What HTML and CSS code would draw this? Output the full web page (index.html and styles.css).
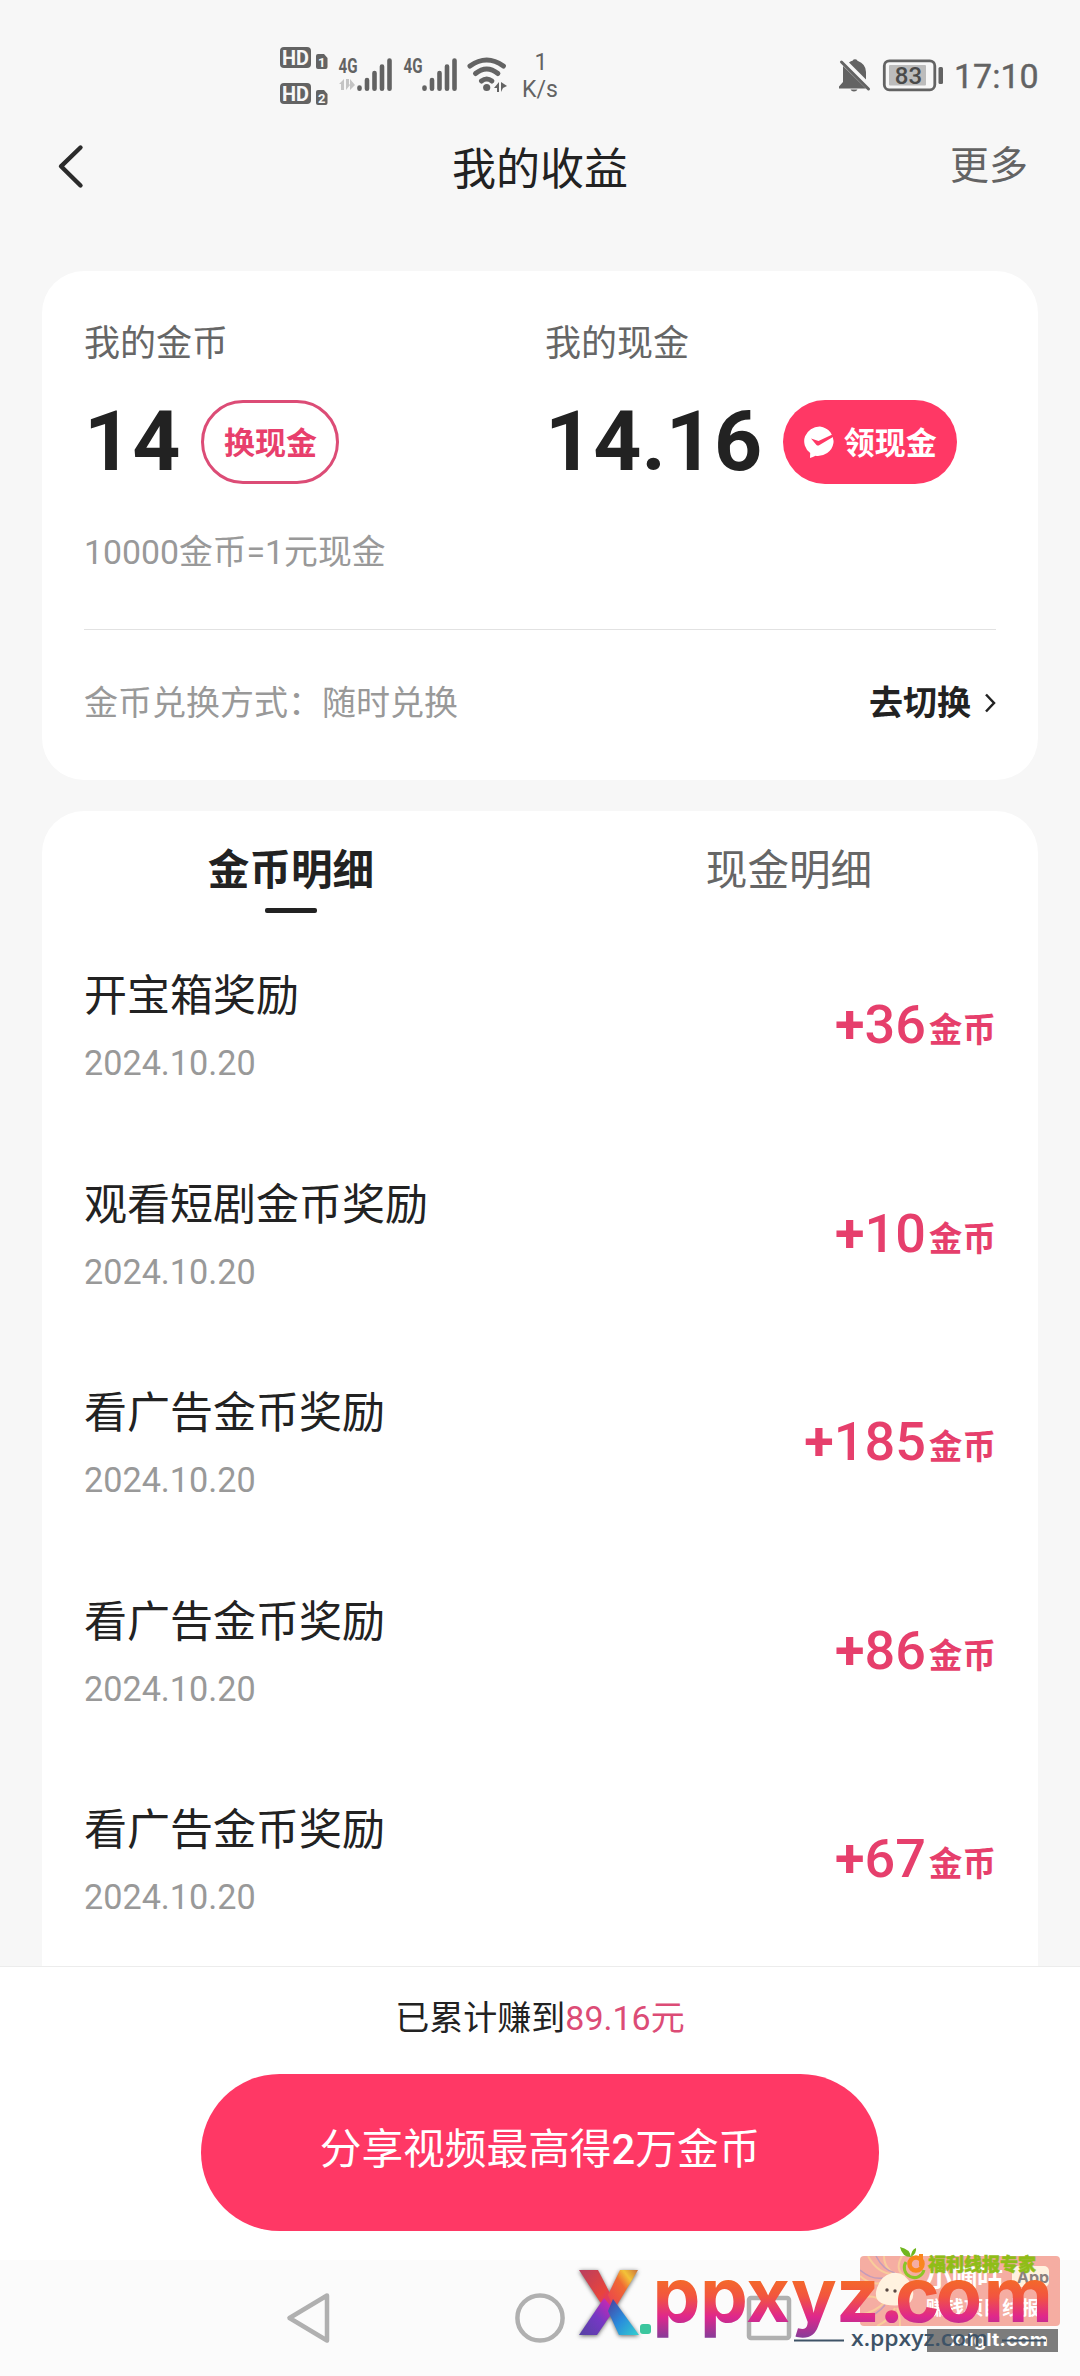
FILE: index.html
```html
<!DOCTYPE html>
<html lang="zh-CN">
<head>
<meta charset="utf-8">
<title>我的收益</title>
<link rel="stylesheet" href="styles.css">
</head>
<body>
<div class="screen">
  <div class="statusbar">
    <svg class="status-left" width="300" height="80" viewBox="270 40 300 80">
      <g fill="#636363">
        <rect x="280" y="47" width="31" height="21" rx="4"/>
        <rect x="280" y="83" width="31" height="21" rx="4"/>
        <path d="M318 54h6l3.500 4v9a2 2 0 0 1-2 2H318a2 2 0 0 1-2-2V56a2 2 0 0 1 2-2z"/>
        <path d="M318 90h6l3.500 4v9a2 2 0 0 1-2 2H318a2 2 0 0 1-2-2V92a2 2 0 0 1 2-2z"/>
      </g>
      <g class="hd"><text x="282" y="64.500" textLength="27" lengthAdjust="spacingAndGlyphs">HD</text><text x="282" y="100.500" textLength="27" lengthAdjust="spacingAndGlyphs">HD</text></g>
      <g class="sim"><text x="318" y="67">1</text><text x="318" y="103">2</text></g>
      <g class="net"><text x="338.500" y="72.500" textLength="19" lengthAdjust="spacingAndGlyphs">4G</text><text x="403.500" y="72.500" textLength="19" lengthAdjust="spacingAndGlyphs">4G</text></g>
      <g fill="#c4c4c4"><path d="M339 84l5-5v11h-3v-6zM346 79h3v5l1 1-4 5zM350 79l5 6-5 5z"/></g>
      <g stroke="#636363" stroke-width="4.600" stroke-linecap="round"><path d="M359.500 87.500v1.200M367 80v8.700M374.500 73v15.700M382 66.500v22.200M389.500 60.500v28.200"/><path d="M424.500 87.500v1.200M432 80v8.700M439.500 73v15.700M447 66.500v22.200M454.500 60.500v28.200"/></g>
      <g fill="none" stroke="#636363" stroke-width="5" stroke-linecap="round"><path d="M470 66q16.700-12 33.400 0M475.500 73.500q11.200-9 22.400 0M481.500 81q5.200-4 10.400 0"/></g>
      <circle cx="486.700" cy="87.500" r="3.600" fill="#636363"/>
      <path d="M494 88l5-6v10h-2v-4zM501 82l6 4-4 2-2 4z" fill="#636363"/>
      <g class="speed" text-anchor="middle"><text x="541" y="70">1</text><text x="540" y="97">K/s</text></g>
    </svg>
    <svg class="status-right" width="210" height="50" viewBox="836 50 210 50">
      <path fill="#636363" d="M843 66L866 88.500H839v-2l4-4.500zM849 62.500q2-1.500 3.500-1.800a3 3 0 0 1 5 0Q866 64 866 72v7.500zM850.500 89.500h7q-1 2-3.500 2t-3.500-2z"/>
      <path d="M841.500 62L868.500 89" stroke="#636363" stroke-width="3" stroke-linecap="round"/>
      <rect x="884.300" y="60.800" width="50.500" height="29" rx="5" fill="none" stroke="#636363" stroke-width="2.800"/>
      <rect x="889" y="65" width="37" height="20.500" rx="1" fill="#bcbcbc"/>
      <rect x="938.500" y="67" width="4.500" height="17" rx="1.500" fill="#636363"/>
      <text class="battery" x="908.500" y="83.500" text-anchor="middle">83</text>
      <text class="clock" x="954" y="88">17:10</text>
    </svg>
  </div>

  <header class="header">
    <svg width="36" height="50" viewBox="0 0 36 50"><path d="M28.500 6.500L9 25.300 28.500 44.500" fill="none" stroke="#2b2b2b" stroke-width="4.400" stroke-linecap="round" stroke-linejoin="round"/></svg>
    <h1 class="title">我的收益</h1>
    <span class="more">更多</span>
  </header>

  <section class="card balance">
    <div class="accounts">
      <div class="account">
        <div class="label">我的金币</div>
        <div class="amount-row"><span class="amount">14</span><span class="pill outline">换现金</span></div>
        <div class="rate">10000金币=1元现金</div>
      </div>
      <div class="account">
        <div class="label">我的现金</div>
        <div class="amount-row"><span class="amount">14.16</span><span class="pill solid"><svg class="check" width="32" height="32" viewBox="0 0 32 32"><path d="M16 0.500a15.800 14.800 0 1 1-4.500 29.300Q9 31 6 32l.2-5A15.500 14.800 0 0 1 16 .5z" fill="#fff"/><path d="M7 12.500l5.500 6.500q1.500 1 3 0L31.500 9.500V7L14.500 15z" fill="#ff3865"/></svg>领现金</span></div>
      </div>
    </div>
    <div class="mode">
      <span class="mode-label">金币兑换方式：随时兑换</span>
      <span class="switch">去切换<svg class="arrow" width="12" height="20" viewBox="0 0 12 20"><path d="M2 1.500L10 10 2 18.500" fill="none" stroke="#222" stroke-width="2.500"/></svg></span>
    </div>
  </section>

  <section class="card details">
    <div class="tabs"><div class="tab active">金币明细</div><div class="tab">现金明细</div></div>
    <div class="list">
      <div class="item"><div><div class="name">开宝箱奖励</div><div class="date">2024.10.20</div></div><div class="value"><span class="plus">+</span>36<span class="unit">金币</span></div></div>
      <div class="item"><div><div class="name">观看短剧金币奖励</div><div class="date">2024.10.20</div></div><div class="value"><span class="plus">+</span>10<span class="unit">金币</span></div></div>
      <div class="item"><div><div class="name">看广告金币奖励</div><div class="date">2024.10.20</div></div><div class="value"><span class="plus">+</span>185<span class="unit">金币</span></div></div>
      <div class="item"><div><div class="name">看广告金币奖励</div><div class="date">2024.10.20</div></div><div class="value"><span class="plus">+</span>86<span class="unit">金币</span></div></div>
      <div class="item"><div><div class="name">看广告金币奖励</div><div class="date">2024.10.20</div></div><div class="value"><span class="plus">+</span>67<span class="unit">金币</span></div></div>
    </div>
  </section>

  <footer class="footer">
    <div class="total">已累计赚到<span class="total-value">89.16元</span></div>
    <div class="share">分享视频最高得<b class="share-number">2</b>万金币</div>
  </footer>

  <nav class="navbar">
    <svg width="50" height="56" viewBox="0 0 50 56"><path d="M41 5.500L3.500 28 41 50.500z" fill="none" stroke="#b0b0b0" stroke-width="4.500" stroke-linejoin="round"/></svg>
    <svg width="50" height="56" viewBox="0 0 50 56"><circle cx="25" cy="28" r="22.600" fill="none" stroke="#b0b0b0" stroke-width="4.500"/></svg>
    <svg width="50" height="56" viewBox="0 0 50 56"><rect x="5" y="8" width="40" height="40" rx="2" fill="none" stroke="#b0b0b0" stroke-width="4.500"/></svg>
  </nav>

  <svg class="watermark" width="510" height="130" viewBox="570 2240 510 130">
    <defs>
      <linearGradient id="warm" gradientUnits="userSpaceOnUse" x1="0" y1="2279" x2="0" y2="2337"><stop offset="0" stop-color="#f46a28"/><stop offset=".3" stop-color="#f2553f"/><stop offset=".65" stop-color="#df278c"/><stop offset="1" stop-color="#8a3c98"/></linearGradient>
      <linearGradient id="red" x1="0" y1="0" x2="1" y2="1"><stop offset="0" stop-color="#b83e60"/><stop offset=".6" stop-color="#e8443c"/><stop offset="1" stop-color="#d528a0"/></linearGradient>
      <linearGradient id="gold" x1="0" y1="1" x2="1" y2="0"><stop offset="0" stop-color="#e93b55"/><stop offset=".55" stop-color="#f06a32"/><stop offset=".75" stop-color="#f3c338"/><stop offset="1" stop-color="#c9703d"/></linearGradient>
      <linearGradient id="violet" x1="1" y1="0" x2="0" y2="1"><stop offset="0" stop-color="#e024ae"/><stop offset=".5" stop-color="#7538c4"/><stop offset="1" stop-color="#5542a3"/></linearGradient>
      <linearGradient id="blue" x1="0" y1="0" x2="1" y2="1"><stop offset="0" stop-color="#4d3d9b"/><stop offset=".5" stop-color="#298bdc"/><stop offset="1" stop-color="#35cfcf"/></linearGradient>
      <clipPath id="badge"><rect x="860" y="2256" width="200" height="70" rx="4"/></clipPath>
    </defs>
    <g clip-path="url(#badge)">
      <rect x="860" y="2256" width="200" height="70" fill="#f5ada2"/>
      <g fill="none" stroke="#f8cc9b" stroke-width="2"><path d="M860 2276q15 14 31 2M868 2256q10 18 25 18M884 2256q0 14 15 20M902 2256q-8 14 3 20M860 2298q13-4 20 2M863 2314q12-2 22-12M877 2326q13-6 18-18M900 2326q0-12-3-18"/></g>
      <g fill="none" stroke="#c49cba" stroke-width="1.500"><path d="M860 2270q12 10 23 8M876 2256q7 14 19 17M862 2320q15-5 23-15"/></g>
      <path d="M876 2292q3-16 16-19 13-2 20 13 5 17-9 19-29 3-27-13z" fill="#fff2df"/>
      <circle cx="887" cy="2290" r="1.700" fill="#594943"/><circle cx="895" cy="2291" r="1.700" fill="#594943"/>
    </g>
    <text class="badge-name" x="926" y="2287" textLength="77">小嘀咕</text>
    <rect x="1012" y="2266" width="37" height="21" rx="5" fill="#fff2df"/>
    <text class="badge-app" x="1017" y="2283">App</text>
    <text class="badge-sub" x="926" y="2315" textLength="114">赚钱项目线报</text>
    <g fill="none"><path d="M906 2262a10 10 0 1 0 18 8" stroke="#8cc528" stroke-width="3"/><circle cx="916" cy="2264" r="6.500" stroke="#fa861d" stroke-width="4.500"/><path d="M921 2254v12" stroke="#fa861d" stroke-width="4"/></g>
    <path d="M911 2257q-9 0-11-10 10 2 11 10 0-7 5-9 1 5-5 9z" fill="#70b61f"/>
    <text class="expert" x="928" y="2271" textLength="108">福利线报专家</text>
    <rect x="927" y="2329" width="131" height="23" fill="#7c7c7c"/>
    <text class="site" x="950" y="2346" textLength="98" lengthAdjust="spacingAndGlyphs">xdglt.com</text>
    <g class="mark-shadow">
      <path d="M579 2270h19l17 33-4 8-11-9z" fill="url(#red)"/>
      <path d="M638 2270h-18l-12 25 6 15z" fill="url(#gold)"/>
      <path d="M579 2335l25-37 10 12-17 25z" fill="url(#violet)"/>
      <path d="M613 2299l26 36h-20l-11-24z" fill="url(#blue)"/>
    </g>
    <rect x="640" y="2324" width="11" height="10" rx="3" fill="#3bc69e"/>
    <text class="brand" y="2321.500" x="652.500 700 746 791 836 879 895 935.500 983.500">ppxyz.com</text>
    <path d="M794 2340.500h50M1002 2340.500h44" stroke="#3e5367" stroke-width="1.800"/>
    <text class="domain" x="851" y="2346" textLength="137" lengthAdjust="spacingAndGlyphs">x.ppxyz.com</text>
  </svg>
</div>
</body>
</html>
```
FILE: styles.css
```css
* { box-sizing: border-box; }
body {
  margin: 0;
  background: #f7f7f7;
  color: #222;
  font-family: Roboto, "Noto Sans CJK SC", sans-serif;
}
svg { display: block; flex-shrink: 0; }
.screen {
  position: relative;
  display: flex;
  flex-direction: column;
  width: 1080px;
  height: 2376px;
  overflow: hidden;
}
.statusbar {
  display: flex;
  justify-content: space-between;
  align-items: flex-start;
  height: 120px;
  padding: 40px 34px 0 270px;
}
.status-right { margin-top: 10px; }
.hd { font: 700 20px Roboto, sans-serif; fill: #f7f7f7; }
.sim { font: 700 13px Roboto, sans-serif; fill: #f7f7f7; }
.net { font: 700 21px Roboto, sans-serif; fill: #636363; }
.speed { font: 400 23px Roboto, sans-serif; fill: #636363; }
.battery { font: 500 24px Roboto, sans-serif; fill: #4a4a4a; }
.clock { font: 400 34px Roboto, sans-serif; fill: #636363; stroke: #636363; stroke-width: .4px; }

.header {
  display: grid;
  grid-template-columns: 1fr auto 1fr;
  align-items: center;
  height: 92px;
  padding: 0 52px;
}
.title { margin: 8px 0 0; font-size: 44px; font-weight: 400; line-height: 60px; }
.more { justify-self: end; color: #636363; font-size: 39px; line-height: 54px; }

.card { margin: 0 42px; border-radius: 42px; background: #fff; }
.balance { height: 509px; margin-top: 59px; padding: 0 42px; }
.accounts { display: grid; grid-template-columns: 461px 1fr; height: 359px; padding-top: 48px; border-bottom: 1px solid #e2e2e2; }
.label { color: #666; font-size: 36px; line-height: 50px; }
.amount-row { display: flex; align-items: center; gap: 21px; height: 84px; margin-top: 31px; }
.amount { font-size: 84px; font-weight: 700; line-height: 84px; }
.pill {
  display: flex;
  align-items: center;
  justify-content: center;
  height: 84px;
  padding-bottom: 3px;
  border-radius: 42px;
  font-size: 31px;
  font-weight: 700;
}
.outline { width: 138px; border: 3px solid #dc4c76; color: #e83f6c; }
.solid { gap: 8px; width: 174px; background: #ff3865; color: #fff; }
.check { margin-top: 3px; }
.rate { margin-top: 45px; color: #999; font-size: 33.800px; line-height: 48px; }
.mode { display: flex; align-items: center; justify-content: space-between; height: 146px; padding-bottom: 5px; font-size: 34px; }
.mode-label { color: #999; }
.switch { display: flex; align-items: center; gap: 13px; font-weight: 700; }
.arrow { margin-top: 5px; }

.details { flex: 1; min-height: 0; margin-top: 31px; border-radius: 42px 42px 0 0; }
.tabs { display: grid; grid-template-columns: 1fr 1fr; height: 102px; }
.tab {
  display: flex;
  flex-direction: column;
  align-items: center;
  padding-top: 30px;
  color: #666;
  font-size: 41.600px;
  line-height: 60px;
}
.active { color: #222; font-weight: 700; }
.active::after { content: ""; width: 52px; height: 5px; margin-top: 7px; border-radius: 2px; background: #222; }
.list { display: flex; flex-direction: column; padding: 0 42px; }
.item { display: flex; justify-content: space-between; height: 208.500px; padding-top: 53px; }
.name { font-size: 43px; line-height: 60px; }
.date { margin-top: 15px; color: #999; font-size: 34.200px; line-height: 44px; }
.value { padding-top: 27px; color: #e63f6c; font-size: 54px; font-weight: 500; line-height: 64px; }
.plus { font-weight: 700; }
.unit { position: relative; top: -1px; margin-left: 3px; font-size: 33.600px; font-weight: 700; }

.footer {
  display: flex;
  flex-direction: column;
  align-items: center;
  height: 294px;
  margin-bottom: 0;
  padding-top: 26px;
  border-top: 1px solid #ececec;
  background: #fff;
}
.total { font-size: 34px; line-height: 50px; }
.total-value { color: #dc4c76; }
.share {
  width: 678px;
  height: 157px;
  margin-top: 31px;
  border-radius: 79px;
  background: #ff3865;
  color: #fff;
  font-size: 41.700px;
  line-height: 152px;
  text-align: center;
}
.share-number { font-weight: 500; }
.navbar {
  display: flex;
  justify-content: center;
  gap: 179px;
  height: 116px;
  padding-top: 30px;
  background: #fbfbfb;
}

/* promotional stamp floating over the bottom right corner */
.watermark { position: absolute; left: 570px; top: 2240px; }
.mark-shadow { filter: drop-shadow(0 1px 2px #666); }
.brand { font: 700 76px Inter, sans-serif; fill: url(#warm); }
.domain { font: 600 22px "Open Sans", sans-serif; fill: #3e5367; }
.site { font: 700 18px Inter, sans-serif; fill: #fff; }
.badge-name { font: 700 26px "Noto Sans CJK SC", sans-serif; fill: #fff; }
.badge-app { font: 700 16px Inter, sans-serif; fill: #8b817e; }
.badge-sub { font: 700 19px "Noto Sans CJK SC", sans-serif; fill: #fff; }
.expert { font: 900 18px "Noto Sans CJK SC", sans-serif; fill: #8fbd17; stroke: #8fbd17; stroke-width: .5px; }
```
